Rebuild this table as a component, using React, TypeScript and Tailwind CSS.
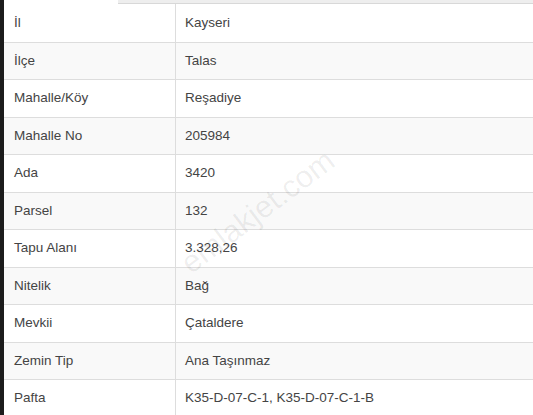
const ROWS: [string, string][] = [
  ['İl', 'Kayseri'],
  ['İlçe', 'Talas'],
  ['Mahalle/Köy', 'Reşadiye'],
  ['Mahalle No', '205984'],
  ['Ada', '3420'],
  ['Parsel', '132'],
  ['Tapu Alanı', '3.328,26'],
  ['Nitelik', 'Bağ'],
  ['Mevkii', 'Çataldere'],
  ['Zemin Tip', 'Ana Taşınmaz'],
  ['Pafta', 'K35-D-07-C-1, K35-D-07-C-1-B'],
];

export default function App() {
  return (
    <div className="relative flex w-[533px] h-[415px] overflow-hidden bg-white font-['Liberation_Sans',Arial,sans-serif] text-[13.5px] text-[#444]">
      <div className="w-[4px] shrink-0 bg-[#1c1c1c]" />
      <div className="flex-1 flex flex-col">
        {/* top tab strip */}
        <div className="h-[4px] shrink-0 flex">
          <div className="w-[114px]" />
          <div className="flex-1 bg-[#eeeeee] border-b border-[#d8d8d8]" />
        </div>
        {ROWS.map(([label, value], i) => (
          <div
            key={label}
            className={`h-[37.5px] shrink-0 flex items-center border-t border-[#dddddd] ${
              i % 2 === 1 ? 'bg-[#f9f9f9]' : 'bg-white'
            } ${i === 0 ? 'border-t-0' : ''}`}
          >
            <div className="w-[172px] h-full flex items-center pl-[10px] border-r border-[#dddddd]">{label}</div>
            <div className="pl-[9px]">{value}</div>
          </div>
        ))}
      </div>
      {/* watermark */}
      <div className="absolute left-[258px] top-[212px] -translate-x-1/2 -translate-y-1/2 -rotate-[37deg] text-[31px] text-black/[0.07] pointer-events-none whitespace-nowrap">
        emlakjet.com
      </div>
    </div>
  );
}
